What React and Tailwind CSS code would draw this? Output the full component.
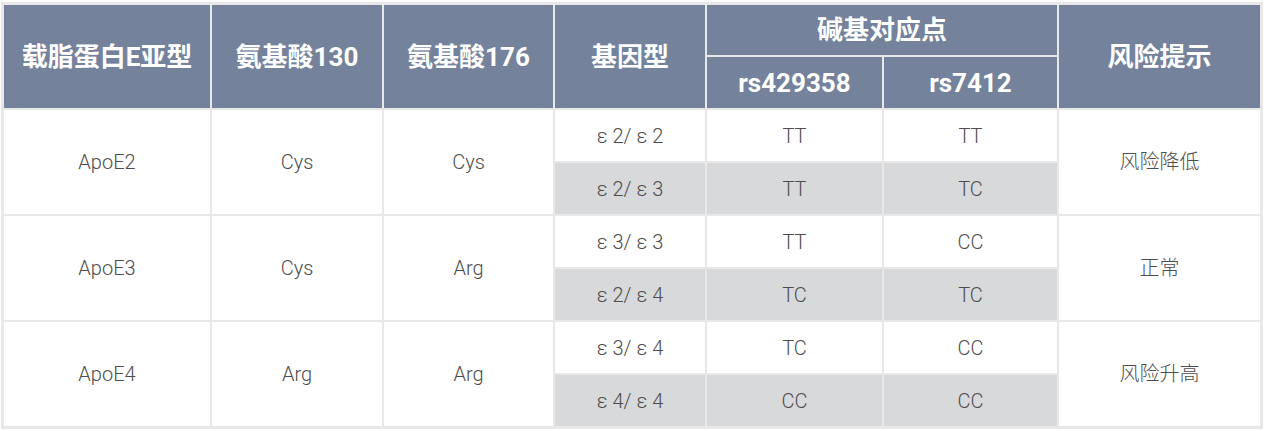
import React from "react";

const groups = [
    {
        type: "ApoE2",
        a130: "Cys",
        a176: "Cys",
        risk: "风险降低",
        rows: [
            { geno: "ε 2/ ε 2", s1: "TT", s2: "TT" },
            { geno: "ε 2/ ε 3", s1: "TT", s2: "TC" },
        ],
    },
    {
        type: "ApoE3",
        a130: "Cys",
        a176: "Arg",
        risk: "正常",
        rows: [
            { geno: "ε 3/ ε 3", s1: "TT", s2: "CC" },
            { geno: "ε 2/ ε 4", s1: "TC", s2: "TC" },
        ],
    },
    {
        type: "ApoE4",
        a130: "Arg",
        a176: "Arg",
        risk: "风险升高",
        rows: [
            { geno: "ε 3/ ε 4", s1: "TC", s2: "CC" },
            { geno: "ε 4/ ε 4", s1: "CC", s2: "CC" },
        ],
    },
];

const head =
    "flex items-center justify-center bg-[#74829c] text-white font-bold text-[26px] leading-none";
const cell =
    "flex items-center justify-center text-[20px] font-light text-[#4d4d4d] leading-none";

const App = () => {
    return (
        <div className="min-h-screen bg-white pt-[2px] pl-px font-['Roboto','Noto_Sans_CJK_SC',sans-serif]">
            <div className="w-fit grid grid-cols-[206px_170px_169px_150px_175px_173px_201px] grid-rows-[50px_51px_repeat(6,51px)] gap-[2px] p-[3px] bg-[#e8e8e8]">
                <div className={`${head} row-span-2`}>载脂蛋白E亚型</div>
                <div className={`${head} row-span-2`}>氨基酸130</div>
                <div className={`${head} row-span-2`}>氨基酸176</div>
                <div className={`${head} row-span-2`}>基因型</div>
                <div className={`${head} col-span-2`}>碱基对应点</div>
                <div className={`${head} row-span-2`}>风险提示</div>
                <div className={head}>rs429358</div>
                <div className={head}>rs7412</div>

                {groups.map((g) => (
                    <React.Fragment key={g.type}>
                        <div className={`${cell} row-span-2 bg-white`}>{g.type}</div>
                        <div className={`${cell} row-span-2 bg-white`}>{g.a130}</div>
                        <div className={`${cell} row-span-2 bg-white`}>{g.a176}</div>
                        <div className={`${cell} bg-white`}>{g.rows[0].geno}</div>
                        <div className={`${cell} bg-white`}>{g.rows[0].s1}</div>
                        <div className={`${cell} bg-white`}>{g.rows[0].s2}</div>
                        <div className={`${cell} row-span-2 bg-white`}>{g.risk}</div>
                        <div className={`${cell} bg-[#d8d9db]`}>{g.rows[1].geno}</div>
                        <div className={`${cell} bg-[#d8d9db]`}>{g.rows[1].s1}</div>
                        <div className={`${cell} bg-[#d8d9db]`}>{g.rows[1].s2}</div>
                    </React.Fragment>
                ))}
            </div>
        </div>
    );
};

export default App;
